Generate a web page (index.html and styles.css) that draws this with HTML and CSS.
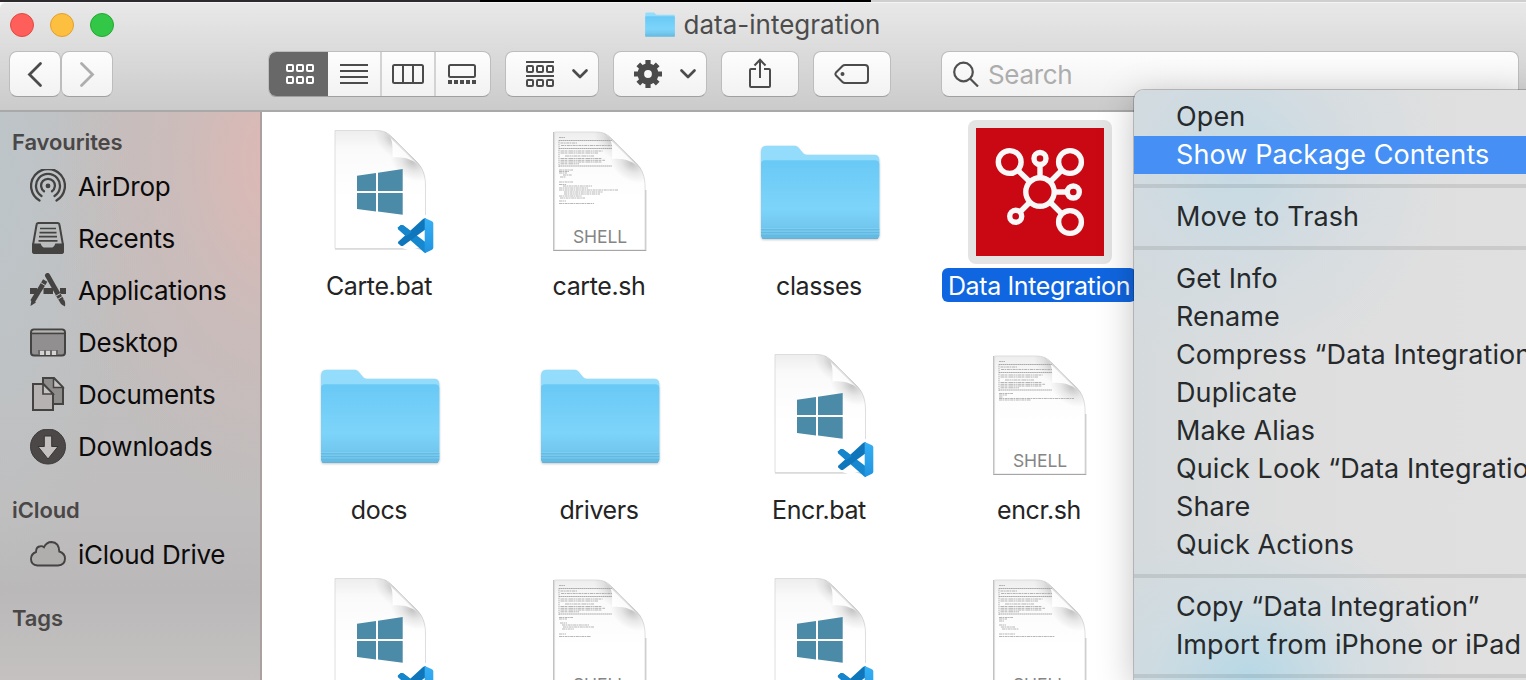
FILE: index.html
```html
<!DOCTYPE html>
<html lang="en">
<head>
<meta charset="utf-8">
<title>data-integration</title>
<link rel="stylesheet" href="styles.css">
</head>
<body>
<svg class="defs" aria-hidden="true">
  <defs>
    <linearGradient id="g-front" x1="0" y1="0" x2="0" y2="1">
      <stop offset="0" stop-color="#69c9f5"/><stop offset=".62" stop-color="#7dd4fa"/><stop offset=".84" stop-color="#72c8ee"/><stop offset="1" stop-color="#62b8e0"/>
    </linearGradient>
    <linearGradient id="g-page" gradientUnits="userSpaceOnUse" x1="64" y1="2" x2="64" y2="70">
      <stop offset="0" stop-color="#ededed"/><stop offset=".28" stop-color="#fafafa"/><stop offset="1" stop-color="#fff"/>
    </linearGradient>
    <radialGradient id="g-shade" gradientUnits="userSpaceOnUse" cx="0" cy="0" r="1" gradientTransform="translate(96 34) rotate(35) scale(24 17)">
      <stop offset="0" stop-color="#000" stop-opacity=".22"/><stop offset=".5" stop-color="#000" stop-opacity=".08"/><stop offset="1" stop-color="#000" stop-opacity="0"/>
    </radialGradient>
    <radialGradient id="g-shade2" gradientUnits="userSpaceOnUse" cx="0" cy="0" r="1" gradientTransform="translate(76 12) rotate(50) scale(22 14)">
      <stop offset="0" stop-color="#000" stop-opacity=".17"/><stop offset=".5" stop-color="#000" stop-opacity=".06"/><stop offset="1" stop-color="#000" stop-opacity="0"/>
    </radialGradient>
    <linearGradient id="g-flap" gradientUnits="userSpaceOnUse" x1="78" y1="30" x2="90" y2="20">
      <stop offset="0" stop-color="#fff"/><stop offset=".75" stop-color="#fbfbfb"/><stop offset="1" stop-color="#e4e4e4"/>
    </linearGradient>
    <linearGradient id="g-code" x1="0" y1="0" x2="0" y2="1">
      <stop offset="0" stop-color="#37b0f5"/><stop offset="1" stop-color="#1f93e0"/>
    </linearGradient>

    <symbol id="page" viewBox="0 0 128 128">
      <path d="M19 2.500H60C68 2.500 72 5 76.500 9.500L101 34C106.500 39.500 109.500 47 109.500 58V120.500H19Z" fill="url(#g-page)" stroke="#dadada" stroke-width=".9"/>
      <path d="M19 2.500H60C68 2.500 72 5 76.500 9.500L101 34C106.500 39.500 109.500 47 109.500 58V120.500H19Z" fill="url(#g-shade)"/>
      <path d="M19 2.500H60C68 2.500 72 5 76.500 9.500L101 34C106.500 39.500 109.500 47 109.500 58V120.500H19Z" fill="url(#g-shade2)"/>
      <path d="M70 4.500C74 7 76.500 12 76.500 20V29.500C88 28.500 98 31.500 105 39Z" fill="url(#g-flap)"/>
      <path d="M69 4L105 39" stroke="#cfcfcf" stroke-width=".8" fill="none"/>
    </symbol>

    <symbol id="bat" viewBox="0 0 128 128">
      <use href="#page" width="128" height="128"/>
      <path d="M19 121.200H109.500" stroke="#d6d6d6"/>
      <path fill="#4b8ba7" d="M41 47.700L60 45V63H41ZM62 44.700L86.700 41V63H62ZM41 65H60V83.400L41 81ZM62 65H86.700V86.700L62 83.600Z"/>
      <path d="M83 99L87 96L109 89L117 93V121L109 126L87 118L82 115Z" fill="none" stroke="#fff" stroke-width="4" stroke-linejoin="round"/>
      <path d="M82 99.500L84.500 97.200Q86 96.500 87.500 97.500L110 114.500V125L108.200 124.500L82.500 101.500Q81.500 100.500 82 99.500Z" fill="#1588cf"/>
      <path d="M82.500 113.500L106.500 91.500Q108.500 89.800 110 90.500V101L87.500 117.500Q86 118.500 84.500 117.500L82.300 115.500Q81.500 114.500 82.500 113.500Z" fill="#0f76bb"/>
      <path d="M82 99.500L84.500 97.200Q86 96.500 87.500 97.500L96 104L90 108.200L82.500 101.500Q81.500 100.500 82 99.500Z" fill="#1585cc"/>
      <path d="M108.700 90L116 93.300Q117.300 94 117.300 95.500V119.500Q117.300 121 116 121.700L108.700 125.200Z" fill="url(#g-code)"/>
    </symbol>

    <symbol id="preview" viewBox="0 0 128 128">
      <g fill="none" stroke="#a2a2a2" stroke-width=".8">
        <path d="M23 9.500H29" stroke-dasharray="2 .4"/>
        <path d="M23 12.500H76M23 20.500H76M23 38H76" stroke-width=".9" stroke-dasharray="1.600 .3"/>
        <path d="M23 12V39" stroke-dasharray="1.400 .6"/>
        <path d="M24.500 15H41M25 17.500H76" stroke-dasharray="3 .6 1.500 .7"/>
        <path d="M24.500 23H67M24.500 25H62M29 28H58M24.500 30.500H66M24.500 32.300H69M24.500 34H66M24.500 35.800H43" stroke-dasharray="4 .5 2 .6 1 .4"/>
      </g>
    </symbol>
    <symbol id="shell" viewBox="0 0 128 128">
      <path d="M17.800 4V122.300H109.700V62" fill="none" stroke="#b4b4b4" stroke-width="1.200"/>
      <g transform="translate(-.4 1.500)"><use href="#page" width="128" height="128"/></g>
      <path d="M17.500 122.500H110" stroke="#a6a6a6" stroke-width="1"/>
      <use href="#preview" width="128" height="128"/>
      <text x="64" y="114.500" text-anchor="middle" class="kind">SHELL</text>
    </symbol>

    <symbol id="folder" viewBox="0 0 128 128">
      <path d="M5 24Q5 17.700 10 17.700H39Q41 17.700 42.500 19.500L47 25Q48 26.700 51 26.700H118Q123.300 26.700 123.300 32V107Q123.300 110.500 120 110.500H8.500Q5 110.500 5 107Z" fill="#94dcfb"/>
      <path d="M5 36Q5 32.300 9 32.300H119Q123.300 32.300 123.300 36V107Q123.300 110.500 120 110.500H8.500Q5 110.500 5 107Z" fill="url(#g-front)"/>
      <path d="M5 100.500H123.300M5 103.200H123.300M5 106H123.300" stroke="#82d0f3" stroke-width=".8"/>
      <path d="M5 101.600H123.300M5 104.500H123.300M5 107.300H123.300" stroke="#62b8e0" stroke-width=".8"/>
      <path d="M6 110.600H122" stroke="#5aa9cf" stroke-width=".8"/>
    </symbol>

    <symbol id="chev" viewBox="0 0 18 12"><path d="M2.500 2.500L9 9L15.500 2.500" fill="none" stroke="#4b4b4b" stroke-width="2.700" stroke-linecap="round" stroke-linejoin="round"/></symbol>
  </defs>
</svg>

<div class="backdrop"><span class="backdrop-dark"></span><span class="backdrop-black"></span></div>

<div class="window">
  <header class="toolbar">
    <div class="titlebar">
      <div class="lights"><i class="light red"></i><i class="light amber"></i><i class="light green"></i></div>
      <div class="title">
        <svg class="title-icon" viewBox="4 16 120 96" preserveAspectRatio="none"><use href="#folder" width="128" height="128"/></svg>
        <span>data-integration</span>
      </div>
    </div>
    <div class="controls">
      <div class="nav">
        <button class="btn nav-btn"><svg width="50" height="44"><path d="M30.500 11.500L19.500 22.500L30.500 33.500" fill="none" stroke="#4b4b4b" stroke-width="2.800" stroke-linecap="round" stroke-linejoin="miter"/></svg></button>
        <button class="btn nav-btn"><svg width="50" height="44"><path d="M19.500 11.500L30.500 22.500L19.500 33.500" fill="none" stroke="#adadad" stroke-width="2.800" stroke-linecap="round"/></svg></button>
      </div>
      <div class="segments">
        <span class="seg active"><svg width="28" height="20" fill="none" stroke="#fff" stroke-width="2"><rect x="1" y="1" width="6" height="6" rx="1"/><rect x="11" y="1" width="6" height="6" rx="1"/><rect x="21" y="1" width="6" height="6" rx="1"/><rect x="1" y="13" width="6" height="6" rx="1"/><rect x="11" y="13" width="6" height="6" rx="1"/><rect x="21" y="13" width="6" height="6" rx="1"/></svg></span>
        <span class="seg"><svg width="28" height="20" stroke="#4b4b4b" stroke-width="2"><path d="M0 1H28M0 7H28M0 13H28M0 19H28"/></svg></span>
        <span class="seg"><svg width="32" height="20" fill="none" stroke="#4b4b4b" stroke-width="2"><rect x="1" y="1" width="30" height="18" rx="1.500"/><path d="M11 1V19M21 1V19"/></svg></span>
        <span class="seg"><svg width="28" height="20" fill="none" stroke="#4b4b4b" stroke-width="2"><rect x="1" y="1" width="26" height="12" rx="1.500"/><path d="M0 18H28" stroke-width="4" stroke-dasharray="4 2"/></svg></span>
      </div>
      <button class="btn drop"><svg class="drop-icon" width="28" height="26" fill="none" stroke="#4b4b4b" stroke-width="2"><path d="M0 1H28M0 15H28"/><rect x="1" y="5" width="6" height="6" rx="1"/><rect x="11" y="5" width="6" height="6" rx="1"/><rect x="21" y="5" width="6" height="6" rx="1"/><rect x="1" y="19" width="6" height="6" rx="1"/><rect x="11" y="19" width="6" height="6" rx="1"/><rect x="21" y="19" width="6" height="6" rx="1"/></svg><svg class="chev" width="18" height="12"><use href="#chev"/></svg></button>
      <button class="btn drop"><svg class="drop-icon" width="28" height="28" viewBox="-14 -14 28 28"><g stroke="#4b4b4b" stroke-width="5.200"><path d="M0-14V-6M0 14V6M-14 0H-6M14 0H6"/><path d="M-9.700-9.700L-4-4M9.700 9.700L4 4M-9.700 9.700L-4 4M9.700-9.700L4-4"/></g><circle r="7.200" fill="none" stroke="#4b4b4b" stroke-width="6.600"/></svg><svg class="chev" width="18" height="12"><use href="#chev"/></svg></button>
      <button class="btn tool"><svg width="24" height="32" fill="none" stroke="#4b4b4b" stroke-width="2"><path d="M8 11H3Q2 11 2 12V28Q2 29 3 29H21Q22 29 22 28V12Q22 11 21 11H16M12 20V2M6.500 7.500L12 1.800L17.500 7.500"/></svg></button>
      <button class="btn tool"><svg width="36" height="20" fill="none" stroke="#4b4b4b" stroke-width="2"><path d="M11 1H31Q34 1 34 4V16Q34 19 31 19H11Q9.500 19 8.500 18L2 11.500Q.8 10 2 8.500L8.500 2Q9.500 1 11 1Z"/><circle cx="8.500" cy="10" r="2" fill="#4b4b4b" stroke="none"/></svg></button>
      <div class="search"><svg width="26" height="26" fill="none" stroke="#4f4f4f" stroke-width="2.200"><circle cx="10.500" cy="11" r="9.300"/><path d="M17 17.500L25 25.500"/></svg><span>Search</span></div>
    </div>
  </header>

  <div class="body">
    <aside class="sidebar">
      <h2>Favourites</h2>
      <div class="row"><svg width="36" height="36" fill="none" stroke="#454342" stroke-width="2.300" stroke-linecap="round"><path d="M9.500 31.500A16.900 16.900 0 1 1 26.500 31.500M11.500 27A12 12 0 1 1 24.500 27M14 22.300A6.900 6.900 0 1 1 22 22.300"/><circle cx="18" cy="16.900" r="2.400" fill="#454342" stroke="none"/></svg><span>AirDrop</span></div>
      <div class="row"><svg width="36" height="36" fill="none" stroke="#454342" stroke-width="2"><path d="M6.500 4Q6.800 2 8.500 2H27.500Q29.200 2 29.500 4L33 24V30Q33 32 31 32H5Q3 32 3 30V24Z" fill="#b4b1b1" fill-opacity=".4"/><path d="M3 23.500H10Q11.500 27.500 15 27.500H21Q24.500 27.500 26 23.500H33V30Q33 32 31 32H5Q3 32 3 30Z" fill="#454342"/><path d="M10 7.500H26M9.500 11.700H26.500M9 15.700H27M8.500 19.800H27.500" stroke-width="1.700"/></svg><span>Recents</span></div>
      <div class="row"><svg width="36" height="36" fill="none" stroke="#454342"><path d="M0 18H7M13.500 18H23M30 18H36" stroke-width="6"/><path d="M15.200 7.500L2.500 28.500" stroke-width="5"/><path d="M1.500 26.500L.5 33L6 29.500Z" fill="#454342" stroke="none"/><path d="M17.500 2.500L28 21" stroke-width="5" stroke-linecap="round"/><path d="M27.700 21L31.500 27" stroke-width="5"/><path d="M29 27Q34 24 35 29Q35.500 31.500 35 33.500Q30 31.500 29 27Z" fill="#454342" stroke="none"/><path d="M10.500 9.500L16 13M26 23L30.500 20.500M27.500 26.500L33 23" stroke="#c1bebe" stroke-width="1"/></svg><span>Applications</span></div>
      <div class="row"><svg width="36" height="36" fill="none" stroke="#454342" stroke-width="2"><rect x="1" y="4.500" width="34" height="26" rx="3" fill="#918f8f"/><path d="M2 7.500Q2 5.500 4 5.500H32Q34 5.500 34 7.500Z" fill="#b5b2b2" stroke="none"/><path d="M1 8.500H35" stroke-width="1.700"/><path d="M8 25H28V30H8Z" fill="#6a6868" stroke="none"/><path d="M10 25.700H14V30H10ZM16 25.700H20V30H16ZM22 25.700H26V30H22Z" fill="#d5d3d3" stroke="none"/></svg><span>Desktop</span></div>
      <div class="row"><svg width="36" height="36" stroke="#454342" stroke-width="2"><path d="M13 1H24L33 10.500V27H13Z" fill="#8f8c8c"/><path d="M23.500 1V10.500H33Z" fill="#c4c1c0" stroke-width="1.500"/><path d="M3 7H13.500L23 17V33H3Z" fill="#b5b2b1"/><path d="M13 7V17H23Z" fill="#c4c1c0" stroke-width="1.700"/></svg><span>Documents</span></div>
      <div class="row"><svg width="36" height="36"><circle cx="18" cy="17.500" r="17.500" fill="#4b4847" stroke="#3e3c3b"/><path d="M14.300 7H21.700V17.500H28L18 30L8 17.500H14.300Z" fill="#c3c0bf" stroke="#373534" stroke-width="1"/></svg><span>Downloads</span></div>
      <h2>iCloud</h2>
      <div class="row"><svg width="36" height="36"><path d="M7.500 28.500Q1 28 1 22Q1 17 6 15Q6 9.500 10.500 9.200Q12.500 9 14 10.200Q16.500 5 21.500 5Q29 5.500 29.300 14.500Q35 16.500 35 21.500Q35 28 28 28.500Z" fill="#b0aead" stroke="#454342" stroke-width="1.900"/></svg><span>iCloud Drive</span></div>
      <h2>Tags</h2>
    </aside>

    <main class="grid">
      <div class="item"><div class="thumb"><svg class="doc"><use href="#bat"/></svg></div><span class="name">Carte.bat</span></div>
      <div class="item"><div class="thumb"><svg class="doc" viewBox="0 0 128 128"><use href="#shell"/><path class="code" d="M23 42H37M23 43.500H33M23 45H31M27 47H36M24 49H30M23 54H37M23 56.500H30M27 58H56M23 60H52M23 62H82M28 64H67M28 66H64M23 68H46M24 70H49M23 73H30M23 75.500H58"/></svg></div><span class="name">carte.sh</span></div>
      <div class="item"><div class="thumb"><svg class="doc dir"><use href="#folder"/></svg></div><span class="name">classes</span></div>
      <div class="item selected"><div class="thumb"><svg class="doc" viewBox="0 0 128 128"><rect width="128" height="128" fill="#c90813"/><g fill="none" stroke="#f8f8f8" stroke-width="5.400"><path d="M41.500 42L54 54M86 42L74 54M74 74L86 86M45 83L54 74M64 36V50M78 64H91"/><circle cx="64" cy="64" r="14.200"/><circle cx="33.700" cy="34" r="11.400"/><circle cx="94" cy="34" r="11.400"/><circle cx="94" cy="94" r="11.400"/><circle cx="64" cy="30.500" r="6"/><circle cx="97.300" cy="64" r="6"/><circle cx="39.700" cy="88.300" r="6"/></g></svg></div><span class="name">Data Integration</span></div>

      <div class="item"><div class="thumb"><svg class="doc dir"><use href="#folder"/></svg></div><span class="name">docs</span></div>
      <div class="item"><div class="thumb"><svg class="doc dir"><use href="#folder"/></svg></div><span class="name">drivers</span></div>
      <div class="item"><div class="thumb"><svg class="doc"><use href="#bat"/></svg></div><span class="name">Encr.bat</span></div>
      <div class="item"><div class="thumb"><svg class="doc" viewBox="0 0 128 128"><use href="#shell"/><path class="code" d="M23 41.500H37M23 43H31M23 45H27M23 46.500H98M23 48H55"/></svg></div><span class="name">encr.sh</span></div>

      <div class="item"><div class="thumb"><svg class="doc"><use href="#bat"/></svg></div></div>
      <div class="item"><div class="thumb"><svg class="doc" viewBox="0 0 128 128"><use href="#shell"/><path class="code" d="M23 41.500H37M23 43H31M24 47H31M26 49H53M27 51H58M26 53H38M23 58H30M23 60.500H55"/></svg></div></div>
      <div class="item"><div class="thumb"><svg class="doc"><use href="#bat"/></svg></div></div>
      <div class="item"><div class="thumb"><svg class="doc" viewBox="0 0 128 128"><use href="#shell"/><path class="code" d="M23 41.500H37M23 43H31M23 45H28M23 49H30M25 51H39M26 53H43M23 58H39M23 60.500H79"/></svg></div></div>
    </main>
  </div>
</div>

<nav class="menu">
  <div class="entry">Open</div>
  <div class="entry on">Show Package Contents</div>
  <hr>
  <div class="entry">Move to Trash</div>
  <hr>
  <div class="entry">Get Info</div>
  <div class="entry">Rename</div>
  <div class="entry">Compress “Data Integration”</div>
  <div class="entry">Duplicate</div>
  <div class="entry">Make Alias</div>
  <div class="entry">Quick Look “Data Integration”</div>
  <div class="entry">Share</div>
  <div class="entry">Quick Actions</div>
  <hr>
  <div class="entry">Copy “Data Integration”</div>
  <div class="entry">Import from iPhone or iPad</div>
  <hr>
</nav>
</body>
</html>
```
FILE: styles.css
```css
* { box-sizing: border-box; }
html, body { margin: 0; height: 680px; overflow: hidden; }
body { position: relative; width: 1526px; font-family: Inter, "Liberation Sans", sans-serif; font-size: 25px; color: #262626; background: #fff; }
svg { display: block; flex: none; }
.defs { position: absolute; width: 0; height: 0; }
.kind { font-family: Inter, "Liberation Sans", sans-serif; font-size: 17.500px; fill: #858585; letter-spacing: -.1px; }

.backdrop { display: flex; height: 2px; background: #cfcfcf; }
.backdrop-dark { width: 480px; background: #2c2a2d; }
.backdrop-black { width: 391px; background: #000; }

.window { display: flex; flex-direction: column; height: 678px; background: #fff; }
.toolbar { height: 110px; flex: none; background: linear-gradient(#e8e8e8, #cbcbcb); border-top: 1px solid #f4f4f4; border-bottom: 2px solid #a9a9a9; border-radius: 6px 0 0 0; }
.titlebar { display: grid; grid-template-columns: 1fr auto 1fr; align-items: center; height: 43px; padding-left: 10px; }
.lights { display: flex; gap: 16px; }
.light { width: 24px; height: 24px; border-radius: 50%; border: 1px solid; }
.red { background: #fe5f5a; border-color: #e14942; }
.amber { background: #fdbf40; border-color: #e1a030; }
.green { background: #33c748; border-color: #20aa30; }
.title { display: flex; align-items: center; gap: 9px; color: #4c4c4c; font-size: 26px; line-height: 32px; margin-right: 11px; }
.title-icon { width: 30px; height: 25px; }

.controls { display: flex; height: 46px; margin-top: 5px; padding-left: 10px; }
.btn, .segments, .search { height: 46px; border: 1px solid #bdbdbd; border-bottom-color: #a0a0a0; border-radius: 8px; background: linear-gradient(#fdfdfd, #f2f2f2); padding: 0; font: inherit; display: flex; align-items: center; }
.nav { display: flex; margin-right: 155px; margin-left: -1px; }
.nav-btn { width: 52px; }
.segments { width: 223px; overflow: hidden; margin-right: 14px; }
.seg { display: flex; align-items: center; justify-content: center; width: 54px; height: 46px; border-left: 2px solid #d3d3d3; }
.seg.active { width: 60px; margin-left: -1px; background: #686868; border: 0; padding-left: 3px; }
.seg.active + .seg { border-left: 0; width: 52px; }
.drop { width: 94px; margin-right: 14px; padding-left: 20px; }
.drop .chev { margin-left: 17px; }
.tool { width: 78px; margin-right: 14px; justify-content: center; }
.search { width: 578px; margin-left: 36px; padding-left: 11px; gap: 9px; color: #adadad; font-size: 26px; letter-spacing: -.35px; }

.body { display: flex; flex: 1; min-height: 0; }
.sidebar { width: 262px; flex: none; border-right: 2px solid #aaa0a0; padding-top: 11px; background: radial-gradient(ellipse 230px 350px at 282px 50px, #dfb8b4, rgba(211,186,183,.6) 45%, rgba(200,188,187,0)), radial-gradient(ellipse 130px 420px at 0 70px, #bdc5c9, rgba(189,197,201,0)), linear-gradient(#c1bfbf, #bfbdbd 70%, #bab8b9 84%, #c4c1c0); }
.sidebar h2 { margin: 0 0 0 12px; height: 38px; line-height: 38px; font-size: 22px; font-weight: 600; color: #4a4747; letter-spacing: -.1px; }
.row + h2 { margin-top: 18px; }
.row { display: flex; align-items: center; gap: 12px; height: 52px; padding-left: 30px; font-size: 26px; color: #0c0a0a; letter-spacing: -.26px; }
.row span { padding-bottom: 2px; }

.grid { flex: 1; display: grid; grid-template-columns: repeat(4, 220px); grid-auto-rows: 224px; padding: 8px 0 0 8px; overflow: hidden; }
.item { display: flex; flex-direction: column; align-items: center; }
.thumb { width: 144px; height: 144px; padding: 8px; border-radius: 8px; }
.doc { width: 128px; height: 128px; }
.dir { filter: drop-shadow(0 1px 1px rgba(0,0,0,.22)); }
.selected .thumb { background: #e4e4e4; }
.name { margin: 4px 2px 0 0; height: 34px; line-height: 36px; padding: 0 6px; border-radius: 6px; white-space: nowrap; font-size: 25px; letter-spacing: -.38px; color: #242424; }
.selected .name { background: #1066e0; color: #fff; }
.code { fill: none; stroke: #a4a4a4; stroke-width: .8; stroke-dasharray: 3 .5 1.500 .6; }

.menu { position: absolute; left: 1134px; top: 90px; width: 392px; height: 590px; padding-top: 8px; border-radius: 10px 0 0 0; overflow: hidden; box-shadow: 0 0 0 1px rgba(0,0,0,.2), 0 8px 36px rgba(0,0,0,.25); background: radial-gradient(ellipse 200px 160px at 115px 590px, #b6d8e6, rgba(200,220,230,.55) 50%, rgba(215,222,226,0)), radial-gradient(ellipse 210px 210px at 105px 75px, #c5dae4, rgba(206,219,227,.55) 50%, rgba(215,222,226,0)), linear-gradient(90deg, #d5dadc, #dedede 160px, #e0e0e0); }
.entry { height: 38px; line-height: 37px; padding-left: 42px; font-size: 27px; letter-spacing: .1px; white-space: nowrap; color: #262a2c; }
.entry.on { background: #458ff5; color: #fff; }
.menu hr { border: 0; height: 4px; margin: 10px 0; background: rgba(0,0,0,.09); }
```
